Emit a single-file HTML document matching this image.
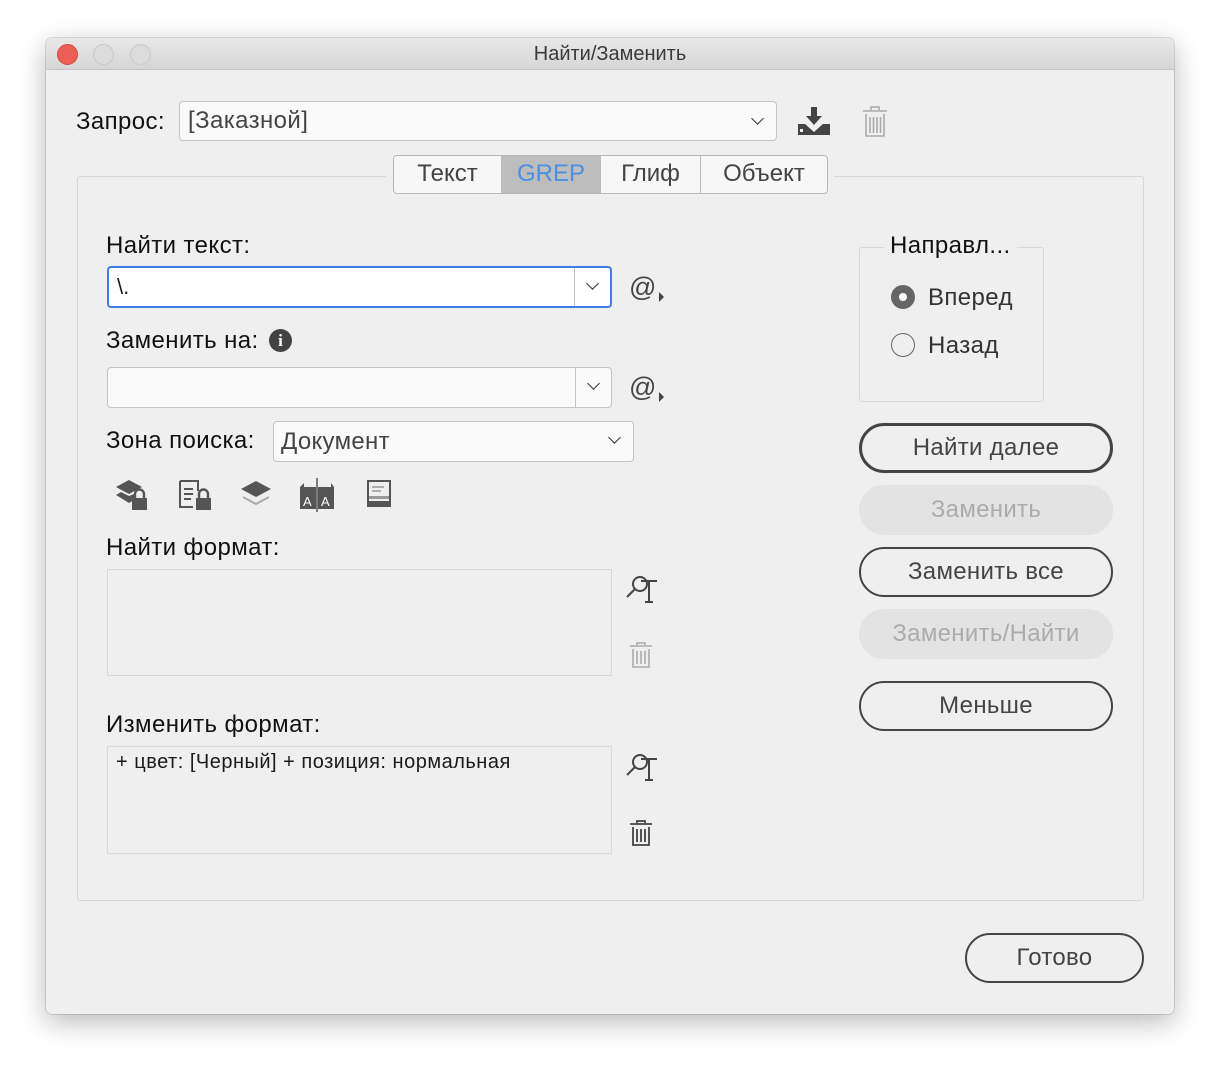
<!DOCTYPE html>
<html><head><meta charset="utf-8"><style>
*{box-sizing:border-box;margin:0;padding:0}
body{width:1220px;height:1068px;background:#fff;font-family:"Liberation Sans",sans-serif;position:relative;overflow:hidden;color:#1a1a1a}
.win{position:absolute;left:46px;top:38px;width:1128px;height:976px;background:#efefef;border-radius:6px;box-shadow:0 8px 28px rgba(0,0,0,.28),0 0 0 1px rgba(0,0,0,.12);overflow:hidden}
.title{position:absolute;left:0;top:0;width:100%;height:32px;background:linear-gradient(#e8e8e8,#d6d6d6);border-bottom:1px solid #c4c4c4;text-align:center;font-size:20px;line-height:32px;color:#3a3a3a}
.dot{position:absolute;top:6px;width:21px;height:21px;border-radius:50%;border:1px solid #c8c8c8;background:#dcdcdc}
.a{position:absolute}
.lbl{position:absolute;font-size:24px;color:#111;line-height:26px;letter-spacing:.4px}
.inp{position:absolute;background:#fafafa;border:1px solid #c4c4c4;border-radius:4px}
.combo .dd{position:absolute;right:0;top:0;bottom:0;width:36px;border-left:1px solid #c4c4c4}
.chev{position:absolute;width:9px;height:9px;border-right:1.6px solid #333;border-bottom:1.6px solid #333;transform:rotate(45deg)}
.btn{position:absolute;left:859px;width:254px;height:50px;border-radius:25px;border:2px solid #444;text-align:center;font-size:24px;line-height:46px;color:#444;letter-spacing:.3px}
.dis{border:none;background:#e3e3e3;color:#ababab;line-height:50px}
.box{position:absolute;border:1.5px solid #d8d8d8;border-radius:3px}
</style></head><body>
<div class="win">
<div class="title">Найти/Заменить</div>
<div class="dot" style="left:11px;background:#ec5f56;border-color:#d64a41"></div>
<div class="dot" style="left:47px"></div>
<div class="dot" style="left:84px"></div>
</div>
<div class="lbl" style="left:76px;top:109px">Запрос:</div>
<div class="inp" style="left:179px;top:101px;width:598px;height:40px;font-size:24px;line-height:38px;padding-left:8px;color:#444;letter-spacing:.4px">[Заказной]<div class="chev" style="right:14px;top:12px"></div></div>
<svg class="a" style="left:797px;top:107px" width="34" height="30" viewBox="0 0 34 30"><path d="M14 0h6v9h5l-8 9-8-9h5z" fill="#444"/><path d="M1 17h7l9 8 9-8h7v11H1z" fill="#444"/><rect x="3" y="22" width="3" height="3" fill="#efefef"/></svg>
<svg class="a" style="left:862px;top:106px" width="26" height="32" viewBox="0 0 26 32" fill="none" stroke="#aaa" stroke-width="1.6"><path d="M9 4V1h8v3M1 5h24M4 8v22h18V8M8 11v16M11.5 11v16M15 11v16M18.5 11v16"/></svg>

<div class="box" style="left:77px;top:176px;width:1067px;height:725px"></div>
<div class="a" style="left:386px;top:170px;width:448px;height:14px;background:#efefef"></div>
<div class="a" style="left:393px;top:155px;width:435px;height:39px;border:1.5px solid #b8b8b8;border-radius:4px;background:#f7f7f7;display:flex;font-size:24px;color:#444;overflow:hidden">
<div style="width:108px;text-align:center;line-height:36px;border-right:1px solid #bbb">Текст</div>
<div style="width:99px;text-align:center;line-height:36px;background:#bdbdbd;color:#4a8fe0;border-right:1px solid #bbb">GREP</div>
<div style="width:100px;text-align:center;line-height:36px;border-right:1px solid #bbb">Глиф</div>
<div style="flex:1;text-align:center;line-height:36px">Объект</div></div>

<div class="lbl" style="left:106px;top:233px">Найти текст:</div>
<div class="inp combo" style="left:107px;top:266px;width:505px;height:42px;border:2px solid #3d7fe6;background:#fff;font-size:22px;line-height:38px;padding-left:8px">\.<div class="dd" style="border-left-color:#c4c4c4"></div><div class="chev" style="right:13px;top:11px"></div></div>
<div class="a" style="left:629px;top:272px;font-size:27px;color:#444">@</div><div class="a" style="left:659px;top:292px;border-left:5px solid #444;border-top:5px solid transparent;border-bottom:5px solid transparent"></div>

<div class="lbl" style="left:106px;top:328px">Заменить на:</div>
<div class="a" style="left:269px;top:329px;width:23px;height:23px;border-radius:50%;background:#444;color:#fff;font:bold 17px/23px 'Liberation Serif',serif;text-align:center">i</div>
<div class="inp combo" style="left:107px;top:367px;width:505px;height:41px"><div class="dd"></div><div class="chev" style="right:13px;top:11px"></div></div>
<div class="a" style="left:629px;top:372px;font-size:27px;color:#444">@</div><div class="a" style="left:659px;top:392px;border-left:5px solid #444;border-top:5px solid transparent;border-bottom:5px solid transparent"></div>

<div class="lbl" style="left:106px;top:428px">Зона поиска:</div>
<div class="inp" style="left:273px;top:421px;width:361px;height:41px;font-size:24px;line-height:39px;padding-left:7px;color:#444;letter-spacing:.3px">Документ<div class="chev" style="right:14px;top:11px"></div></div>

<svg class="a" style="left:112px;top:476px" width="300" height="38" viewBox="0 0 300 38">
<path d="M4 11l13-7 13 7-13 7z" fill="#555"/><path d="M4 19l5-3 8 4 5-2v6l-5 3z" fill="#555"/>
<rect x="20" y="22" width="15" height="12" fill="#555"/><path d="M23 22v-4a4.5 4.5 0 0 1 9 0v4" stroke="#555" stroke-width="2.4" fill="none"/>
<path d="M68 5h18v10M68 5v26h13" stroke="#555" stroke-width="2" fill="none"/><path d="M72 13h9M72 18h9M72 23h7" stroke="#555" stroke-width="2"/>
<rect x="84" y="22" width="15" height="12" fill="#555"/><path d="M87 22v-4a4.5 4.5 0 0 1 9 0v4" stroke="#555" stroke-width="2.4" fill="none"/>
<path d="M129 13l15-8 15 8-15 8z" fill="#555"/><path d="M131 21l13 7 13-7" stroke="#aaa" stroke-width="2" fill="none"/>
<path d="M188 11l4-4v4zM219 11l3 0-3-4z" fill="#555"/><rect x="188" y="11" width="16" height="22" fill="#555"/><rect x="206" y="11" width="16" height="22" fill="#555"/><path d="M205 2v34" stroke="#555" stroke-width="1.5"/>
<text x="191" y="30" fill="#fff" font-size="13" font-family="Liberation Sans">A</text><text x="209" y="30" fill="#fff" font-size="13" font-family="Liberation Sans">A</text>
<rect x="256" y="5" width="22" height="25" fill="none" stroke="#555" stroke-width="2"/><path d="M260 11h12M260 15h9" stroke="#999" stroke-width="1.6"/><rect x="257" y="20" width="20" height="3" fill="#999"/><rect x="257" y="25" width="20" height="4" fill="#555"/>
</svg>

<div class="lbl" style="left:106px;top:535px">Найти формат:</div>
<div class="a" style="left:107px;top:569px;width:505px;height:107px;border:1.5px solid #d8d8d8"></div>
<svg class="a" style="left:625px;top:574px" width="36" height="32" viewBox="0 0 36 32" fill="none" stroke="#444" stroke-width="2"><circle cx="15" cy="10" r="7"/><path d="M10 15l-8 8M16 7h16M24 7v21M20 28h8"/></svg>
<svg class="a" style="left:629px;top:642px" width="24" height="26" viewBox="0 0 24 26" fill="none" stroke="#aaa" stroke-width="1.6"><path d="M8 3V1h8v2M1 4h22M4 7v18h16V7M8 9v13M12 9v13M16 9v13"/></svg>

<div class="lbl" style="left:106px;top:712px">Изменить формат:</div>
<div class="a" style="left:107px;top:746px;width:505px;height:108px;border:1.5px solid #d8d8d8;font-size:20px;letter-spacing:.5px;padding:4px 0 0 8px;color:#1a1a1a">+ цвет: [Черный] + позиция: нормальная</div>
<svg class="a" style="left:625px;top:752px" width="36" height="32" viewBox="0 0 36 32" fill="none" stroke="#444" stroke-width="2"><circle cx="15" cy="10" r="7"/><path d="M10 15l-8 8M16 7h16M24 7v21M20 28h8"/></svg>
<svg class="a" style="left:629px;top:820px" width="24" height="26" viewBox="0 0 24 26" fill="none" stroke="#444" stroke-width="1.8"><path d="M8 3V1h8v2M1 4h22M4 7v18h16V7M8 9v13M12 9v13M16 9v13"/></svg>

<div class="box" style="left:859px;top:247px;width:185px;height:155px"></div>
<div class="lbl" style="left:884px;top:233px;background:#efefef;padding:0 6px">Направл...</div>
<div class="a" style="left:891px;top:285px;width:24px;height:24px;border-radius:50%;background:#666"><div style="position:absolute;left:8px;top:8px;width:8px;height:8px;border-radius:50%;background:#fff"></div></div>
<div class="lbl" style="left:928px;top:285px;color:#333">Вперед</div>
<div class="a" style="left:891px;top:333px;width:24px;height:24px;border-radius:50%;border:1.5px solid #666"></div>
<div class="lbl" style="left:928px;top:333px;color:#333">Назад</div>

<div class="btn" style="top:423px;border-width:3px;line-height:44px">Найти далее</div>
<div class="btn dis" style="top:485px">Заменить</div>
<div class="btn" style="top:547px">Заменить все</div>
<div class="btn dis" style="top:609px">Заменить/Найти</div>
<div class="btn" style="top:681px">Меньше</div>
<div class="btn" style="left:965px;width:179px;top:933px">Готово</div>
</body></html>
